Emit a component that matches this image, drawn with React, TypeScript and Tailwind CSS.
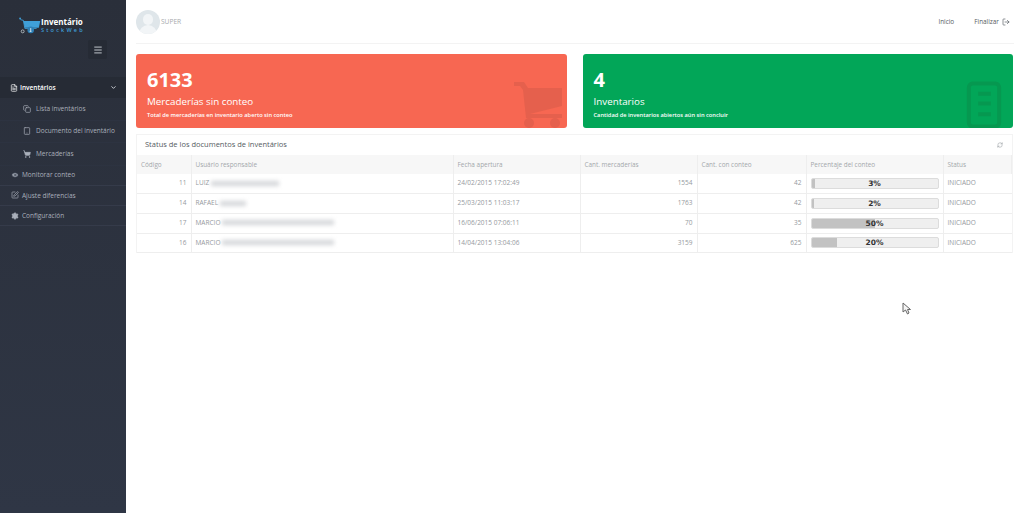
import React from 'react';
import { ChevronDown, Copy, Eye, FileText, LogOut, Menu, RefreshCw, Settings, ShoppingCart, SquarePen, Tablet } from 'lucide-react';

const rows = [
  { id: 11, user: 'LUIZ', blur: 'w-[68px]', date: '24/02/2015 17:02:49', total: 1554, counted: 42, pct: 3 },
  { id: 14, user: 'RAFAEL', blur: 'w-[26px]', date: '25/03/2015 11:03:17', total: 1763, counted: 42, pct: 2 },
  { id: 17, user: 'MARCIO', blur: 'w-[112px]', date: '16/06/2015 07:06:11', total: 70, counted: 35, pct: 50 },
  { id: 16, user: 'MARCIO', blur: 'w-[112px]', date: '14/04/2015 13:04:06', total: 3159, counted: 625, pct: 20 },
];

const Logo = () => (
  <svg width="22" height="21" viewBox="0 0 30 22" className="shrink-0">
    <circle cx="1.5" cy="1.5" r="1.3" fill="#3f9fd8" />
    <path d="M2 3 L6 4 L8 15 L24 15" fill="none" stroke="#3f9fd8" strokeWidth="1.2" />
    <path d="M6 5 H29 L27 14 H8 Z" fill="#3f9fd8" />
    <circle cx="5" cy="19" r="2" fill="none" stroke="#cfd8dc" strokeWidth="1" />
    <circle cx="16" cy="17" r="4.5" fill="#2d7fb5" />
    <path d="M16 14.5 V19 M14.5 19 H17" stroke="#fff" strokeWidth="1" fill="none" />
  </svg>
);

const SubItem = ({ icon, label }: { icon: React.ReactNode; label: string }) => (
  <div className="h-[22.5px] flex items-center pl-[23px] gap-[5px] text-[6.5px] whitespace-nowrap text-[#aab0bb] border-b border-[#2d3341]">
    <span className="w-[8px] flex justify-center">{icon}</span>
    <span>{label}</span>
  </div>
);

const MainItem = ({ icon, label }: { icon: React.ReactNode; label: string }) => (
  <div className="h-[20.3px] flex items-center pl-[11px] gap-[3px] text-[6.5px] whitespace-nowrap text-[#aab0bb] border-b border-[#353b4a]">
    <span className="w-[8px] flex justify-center">{icon}</span>
    <span>{label}</span>
  </div>
);

const StatCard = ({ color, value, title, text, icon }: { color: string; value: string; title: string; text: string; icon: React.ReactNode }) => (
  <div className={`relative flex-1 h-[74px] rounded-[3px] overflow-hidden pl-[11px] pt-[12px] text-white ${color}`}>
    <div className="text-[20px] leading-[27px] font-bold">{value}</div>
    <div className="text-[9.8px] leading-[14px] mt-[2px]">{title}</div>
    <div className="text-[5.7px] leading-[10px] mt-[1px] font-semibold">{text}</div>
    {icon}
  </div>
);

const Th = ({ w, children }: { w: string; children: React.ReactNode }) => (
  <th className={`${w} h-[19px] px-[4px] text-left font-normal text-[6.4px] text-[#a3a7ab] border-r border-[#eeeeee]`}>{children}</th>
);

export default function App() {
  return (
    <div className="flex w-[1024px] h-[513px] overflow-hidden bg-white font-['Open_Sans',sans-serif]">
      <aside className="w-[126px] shrink-0 bg-gradient-to-b from-[#2a2f3a] to-[#2f3645] flex flex-col">
        <div className="h-[38px] pl-[19px] pt-[15px] flex items-start">
          <Logo />
          <div className="pt-[2px]">
            <div className="text-[8px] leading-[10px] font-bold text-white">Inventário</div>
            <div className="text-[5.5px] leading-[7px] tracking-[2.2px] font-semibold text-[#3f9fd8]">StockWeb</div>
          </div>
        </div>
        <div className="ml-[88px] mt-[2px] w-[19px] h-[19px] rounded-[2px] bg-[#262b35] flex items-center justify-center">
          <Menu size={10} className="text-[#dfe3e8]" />
        </div>
        <div className="mt-[18px] h-[21px] bg-[#262b35] flex items-center pl-[10px] pr-[9px] gap-[2px] text-[6.5px] font-semibold text-white">
          <FileText size={8} />
          <span className="flex-1">Inventários</span>
          <ChevronDown size={7} strokeWidth={3} className="text-[#d7dae0]" />
        </div>
        <SubItem icon={<Copy size={8} />} label="Lista inventários" />
        <SubItem icon={<Tablet size={8} />} label="Documento del inventário" />
        <SubItem icon={<ShoppingCart size={8} fill="currentColor" />} label="Mercaderías" />
        <MainItem icon={<Eye size={8} fill="currentColor" stroke="#2f3645" />} label="Monitorar conteo" />
        <MainItem icon={<SquarePen size={8} />} label="Ajuste diferencias" />
        <MainItem icon={<Settings size={8} fill="currentColor" stroke="#aab0bb" />} label="Configuración" />
      </aside>

      <main className="flex-1 min-w-0 px-[10px] relative">
        <header className="h-[44px] flex items-center border-b border-[#f3f3f3]">
          <div className="w-[24px] h-[24px] rounded-full bg-[#dfe6ea] overflow-hidden mt-[1px] flex flex-col items-center shrink-0">
            <div className="w-[10px] h-[12px] mt-[4px] rounded-full bg-[#f2f5f7]" />
            <div className="w-[18px] h-[10px] rounded-t-full bg-[#f2f5f7]" />
          </div>
          <span className="ml-[1px] text-[6.6px] text-[#a5a9ad]">SUPER</span>
          <nav className="ml-auto mr-[4px] mt-[1px] flex items-center text-[6.4px] text-[#555b62]">
            <span>Inicio</span>
            <span className="ml-[20px]">Finalizar</span>
            <LogOut size={8} className="ml-[3px]" />
          </nav>
        </header>

        <div className="mt-[10px] flex gap-[16px] w-[877px]">
          <StatCard
            color="bg-[#f76752]"
            value="6133"
            title="Mercaderías sin conteo"
            text="Total de mercaderías en inventario aberto sin conteo"
            icon={
              <svg viewBox="0 0 50 48" className="absolute right-[3px] bottom-0 w-[50px] h-[48px] text-[#e5604d]" fill="currentColor">
                <path d="M0 2 H10 L14 8 H48 V26 L16 34 H48 V38 H12 L9 10 L6 6 H0 Z" />
                <circle cx="15" cy="43" r="5" />
                <circle cx="41" cy="43" r="5" />
              </svg>
            }
          />
          <StatCard
            color="bg-[#02a658]"
            value="4"
            title="Inventarios"
            text="Cantidad de inventarios abiertos aún sin concluir"
            icon={
              <svg viewBox="0 0 36 48" className="absolute right-[11px] bottom-0 w-[36px] h-[47px] text-[#069850]" fill="none" stroke="currentColor">
                <rect x="2.5" y="2.5" width="31" height="44" rx="4" strokeWidth="4" />
                <path d="M12 13 H25 M12 23 H25 M12 34 H25" strokeWidth="4" />
              </svg>
            }
          />
        </div>

        <section className="mt-[6px] w-[877px] border border-[#f3f3f3] border-b-0">
          <div className="h-[20px] flex items-center justify-between pl-[8px] pr-[9px]">
            <span className="text-[7.5px] text-[#555b62]">Status de los documentos de inventários</span>
            <RefreshCw size={6} className="text-[#8f9499]" />
          </div>
          <table className="w-full table-fixed border-collapse">
            <thead>
              <tr className="bg-[#f7f7f7]">
                <Th w="w-[54px]">Código</Th>
                <Th w="w-[262px]">Usuário responsable</Th>
                <Th w="w-[127px]">Fecha apertura</Th>
                <Th w="w-[117px]">Cant. mercaderías</Th>
                <Th w="w-[109px]">Cant. con conteo</Th>
                <Th w="w-[137px]">Percentaje del conteo</Th>
                <Th w="w-auto">Status</Th>
              </tr>
            </thead>
            <tbody className="text-[6.5px] text-[#95999e]">
              {rows.map((r) => (
                <tr key={r.id} className="h-[19.7px] border-b border-[#eeeeee]">
                  <td className="px-[4px] pb-[1px] text-right border-r border-[#eeeeee]">{r.id}</td>
                  <td className="px-[4px] pb-[1px] border-r border-[#eeeeee]">
                    <div className="flex items-center gap-[2px]">
                      <span>{r.user}</span>
                      <div className={`${r.blur} h-[5px] bg-[#d4d6d9] blur-[2px]`} />
                    </div>
                  </td>
                  <td className="px-[4px] pb-[1px] border-r border-[#eeeeee]">{r.date}</td>
                  <td className="px-[4px] pb-[1px] text-right border-r border-[#eeeeee]">{r.total}</td>
                  <td className="px-[4px] pb-[1px] text-right border-r border-[#eeeeee]">{r.counted}</td>
                  <td className="px-[4px] border-r border-[#eeeeee]">
                    <div className="relative h-[11px] rounded-[2px] bg-[#efefef] border border-[#dcdcdc] overflow-hidden">
                      <div className="h-full bg-[#c2c2c2]" style={{ width: `${r.pct}%` }} />
                      <span className="absolute inset-0 flex items-center justify-center font-['DejaVu_Sans',sans-serif] text-[7.5px] font-bold text-[#333333]">{r.pct}%</span>
                    </div>
                  </td>
                  <td className="px-[4px] pb-[1px]">INICIADO</td>
                </tr>
              ))}
            </tbody>
          </table>
        </section>

        <svg viewBox="0 0 10 13" className="absolute left-[776px] top-[302px] w-[10px] h-[13px]">
          <path d="M1 1 L1 10 L3.5 8 L5.5 12 L7 11 L5.5 7.5 L8.5 7.5 Z" fill="#f4f4f4" stroke="#666666" strokeWidth="1" />
        </svg>
      </main>
    </div>
  );
}
